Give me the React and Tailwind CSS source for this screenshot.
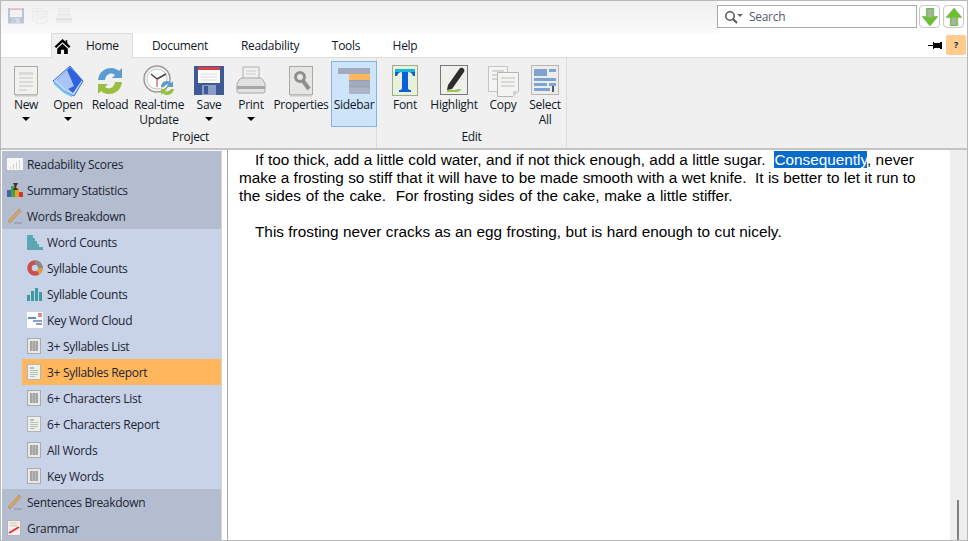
const ui = "font-['Open_Sans','Noto_Sans',sans-serif] tracking-[-0.3px]";

function Doc({ children, bg = "#f1f1ee" }) {
  return (
    <svg width="26" height="32" viewBox="0 0 26 32">
      <rect x="1.500" y="1.500" width="23" height="28" fill={bg} stroke="#a9a9a4" />
      <path d="M2 30.500h22" stroke="#c9c9c9" strokeWidth="2" />
      {children}
    </svg>
  );
}

function NewIcon() {
  return (
    <Doc>
      <path d="M6 7h14v3H6zM6 12h14v2H6zM6 16h14v2H6zM6 20h14v2H6zM6 24h8v2H6z" fill="#dadada" />
    </Doc>
  );
}

function OpenIcon() {
  return (
    <svg width="32" height="32" viewBox="0 0 32 32">
      <path d="M1 16 L12 26 L22 31 L31 16 L18 1 Z" fill="#bcd6fb" stroke="#3d6fe0" />
      <path d="M5 15 L18 2 L30 15 L21 28 Z" fill="#2f62dc" />
      <path d="M5 15 L15 5 L22 21 L14 25 Z" fill="#a9c5f5" />
      <path d="M2 18 L12 27 L20 31" stroke="#6fc3ee" strokeWidth="2" fill="none" />
    </svg>
  );
}

function ReloadIcon() {
  return (
    <svg width="30" height="30" viewBox="0 0 30 30">
      <path d="M3 14 C4 5 11 2 16 2 C20 2 23 4 24 5 L27 2 V12 H17 L20 9 C16 6 11 8 10 14 Z" fill="#5b9dd3" />
      <path d="M27 16 C26 25 19 28 14 28 C10 28 7 26 6 25 L3 28 V18 H13 L10 21 C14 24 19 22 20 16 Z" fill="#98bf42" />
    </svg>
  );
}

function ClockIcon() {
  return (
    <svg width="32" height="32" viewBox="0 0 32 32">
      <circle cx="14" cy="14" r="13" fill="#f4f4f4" stroke="#9a9a9a" strokeWidth="1.500" />
      <circle cx="14" cy="14" r="10" fill="#fff" stroke="#c4c4c4" />
      <path d="M14 14 L8 9 M14 14 L23 9" stroke="#444" strokeWidth="1.500" />
      <path d="M14 14 L14 22" stroke="#c33" />
      <path d="M18 22 C18 17 22 16 24 16 C26 16 27 17 28 18 L30 16 V22 H24 L26 20 C24 19 22 20 21 22 Z" fill="#5b9dd3" />
      <path d="M31 24 C30 29 26 30 24 30 C22 30 20 29 20 28 L18 30 V24 H24 L22 26 C24 27 27 26 28 24 Z" fill="#98bf42" />
    </svg>
  );
}

function SaveIcon({ w = 30, h = 30 }) {
  return (
    <svg width={w} height={h} viewBox="0 0 30 30">
      <path d="M0 0h30v29H0z" fill="#3d5a97" />
      <rect x="4" y="1" width="22" height="16" fill="#fbfbfb" />
      <rect x="4" y="1" width="22" height="3" fill="#d94141" />
      <path d="M7 8h16M7 11h16M7 14h16" stroke="#ddd" />
      <rect x="8" y="19" width="14" height="10" fill="#8d9cc2" />
      <rect x="10" y="20" width="4" height="8" fill="#3d5a97" />
    </svg>
  );
}

function PrintIcon({ w = 30, h = 30 }) {
  return (
    <svg width={w} height={h} viewBox="0 0 30 30">
      <rect x="7" y="1" width="16" height="13" fill="#f0f0f0" stroke="#b0b0b0" />
      <path d="M10 5h10M10 8h10" stroke="#ccc" />
      <path d="M3 14 Q4 12 7 12 H23 Q26 12 27 14 L29 18 V25 Q29 27 27 27 H3 Q1 27 1 25 V18 Z" fill="#e2e2e2" stroke="#a8a8a8" />
      <rect x="1" y="20" width="28" height="3" fill="#a6a6a6" />
    </svg>
  );
}

function PropertiesIcon() {
  return (
    <Doc bg="#e6e6e2">
      <circle cx="12" cy="12" r="4.500" fill="none" stroke="#8f8f8f" strokeWidth="3" />
      <path d="M15 16 L21 24" stroke="#8f8f8f" strokeWidth="4" />
    </Doc>
  );
}

function SidebarIcon() {
  return (
    <svg width="32" height="26" viewBox="0 0 32 26">
      <rect x="0" y="0" width="32" height="6" fill="#a2abbe" />
      <rect x="11" y="6" width="21" height="6" fill="#ffb65c" />
      <rect x="11" y="12" width="21" height="7" fill="#a2abbe" />
      <rect x="11" y="19" width="21" height="7" fill="#adb4c5" />
      <path d="M11 12.500h21M11 19h21" stroke="#8f98ac" strokeWidth="0.600" />
    </svg>
  );
}

function FontIcon() {
  return (
    <svg width="26" height="31" viewBox="0 0 26 31">
      <rect x="0.500" y="0.500" width="25" height="30" fill="#e8f2da" stroke="#9dad8d" />
      <path d="M3 4 H23 V11 H21 Q20 7 16 7 V23 Q16 25 19 25 V27 H7 V25 Q10 25 10 23 V7 Q6 7 5 11 H3 Z" fill="#0a5fd8" />
      <path d="M3 4 H23 V7 H3 Z" fill="#19b6d8" />
    </svg>
  );
}

function HighlightIcon() {
  return (
    <svg width="28" height="31" viewBox="0 0 28 31">
      <rect x="0.500" y="0.500" width="27" height="29" fill="#efefec" stroke="#777" />
      <path d="M8 20 L20 3 Q22 2 24 4 Q25 6 24 7 L12 24 L7 25 Z" fill="#2d2d2d" />
      <path d="M7 25 L14 25 L19 24 L22 25 L17 27 L7 27 Z" fill="#9bc24a" />
    </svg>
  );
}

function CopyIcon({ w = 32, h = 32 }) {
  return (
    <svg width={w} height={h} viewBox="0 0 32 32">
      <rect x="1.500" y="1.500" width="19" height="25" fill="#f4f4f2" stroke="#c4c4c4" />
      <path d="M5 6h12M5 10h12M5 14h12" stroke="#d4d4d4" strokeWidth="2" />
      <path d="M10.500 7.500 H31.500 V26 L26 31.500 H10.500 Z" fill="#f4f4f2" stroke="#b6b6b6" />
      <path d="M14 13h14M14 17h14M14 21h14" stroke="#cfcfcf" strokeWidth="1.500" />
      <path d="M26 31 V26 H31 Z" fill="#d2d2d2" />
    </svg>
  );
}

function SelectAllIcon() {
  return (
    <svg width="28" height="31" viewBox="0 0 28 31">
      <rect x="0.500" y="0.500" width="27" height="29" fill="#ececea" stroke="#b5b5b5" />
      <path d="M3 4h13v7H3zM18 4h7v3h-7zM3 13h22v3H3zM3 18h13v3H3zM18 18h7v3h-7zM3 23h16v3H3z" fill="#7fa3cf" />
      <path d="M22 21v6" stroke="#555" strokeWidth="2" />
    </svg>
  );
}

function Caret() {
  return <div className="w-0 h-0 border-x-[4px] border-x-transparent border-t-[4px] border-t-black" />;
}

function RibbonButton({ label, line2, caret, width, active, children }) {
  return (
    <div
      className={`flex flex-col items-center shrink-0 border ${
        active ? "bg-[#cde4fb] border-[#7fb4e6]" : "border-transparent"
      }`}
      style={{ width }}
    >
      <div className="h-[33px] mt-[2px] flex items-center justify-center">{children}</div>
      <div className="text-[12px] leading-[15px] text-[#101828] whitespace-nowrap">{label}</div>
      {line2 ? <div className="text-[12px] leading-[15px] text-[#101828]">{line2}</div> : null}
      {caret ? (
        <div className="mt-[5px]">
          <Caret />
        </div>
      ) : null}
    </div>
  );
}

function RibbonGroup({ title, className, children }) {
  return (
    <div className={`relative h-full border-r border-[#dcdcdc] ${className}`}>
      <div className="flex pt-[3px]">{children}</div>
      <div className="absolute bottom-[4px] left-0 right-0 text-center text-[12px] leading-[15px] text-[#101828]">
        {title}
      </div>
    </div>
  );
}

function ReadabilityIcon() {
  return (
    <svg width="16" height="12" viewBox="0 0 16 12">
      <rect width="16" height="12" fill="#f7f7f7" />
      <path d="M3 9h1v2H3zM6 6h1v5H6zM9 4h1v7H9zM12 2h1v9h-1z" fill="#d4d4d4" />
    </svg>
  );
}

function SummaryIcon() {
  return (
    <svg width="16" height="14" viewBox="0 0 16 14">
      <rect x="0" y="7" width="4" height="7" fill="#3f62b5" />
      <rect x="4" y="3" width="4" height="11" fill="#4aa03f" />
      <rect x="8" y="5" width="4" height="9" fill="#e2a12c" />
      <rect x="12" y="9" width="4" height="5" fill="#d8332a" />
      <path d="M6 0h5L9 4l2 3H6l2-3z" fill="#333" />
    </svg>
  );
}

function PencilIcon() {
  return (
    <svg width="16" height="16" viewBox="0 0 16 16">
      <path d="M1 13 L12 1 L14 3 L3 15 Z" fill="#d9a860" stroke="#a98a5a" strokeWidth="0.700" />
      <path d="M7 15h8" stroke="#8a8f9e" />
    </svg>
  );
}

function WordCountIcon() {
  return (
    <svg width="16" height="15" viewBox="0 0 16 15">
      <path d="M0 0h6v3H0zM0 3h8v3H0zM0 6h10v3H0zM0 9h12v3H0zM0 12h16v3H0z" fill="#5ba8b5" />
    </svg>
  );
}

function RingIcon() {
  return (
    <svg width="16" height="16" viewBox="0 0 16 16">
      <circle cx="8" cy="8" r="5.500" fill="none" stroke="#c9514b" strokeWidth="4.500" />
      <path d="M8 2.500 A5.500 5.500 0 0 1 13.500 8" fill="none" stroke="#8a8a8a" strokeWidth="4.500" />
      <path d="M13.500 8 A5.500 5.500 0 0 1 11 12.600" fill="none" stroke="#d9a23c" strokeWidth="4.500" />
    </svg>
  );
}

function BarsIcon() {
  return (
    <svg width="16" height="14" viewBox="0 0 16 14">
      <path d="M0 8h3v6H0zM4 4h3v10H4zM8 1h3v13H8zM12 5h3v9h-3z" fill="#3f9a9e" />
    </svg>
  );
}

function CloudIcon() {
  return (
    <svg width="16" height="16" viewBox="0 0 16 16">
      <rect width="16" height="16" fill="#fff" />
      <path d="M1 5h8v2H1z" fill="#5b8fc9" />
      <path d="M11 1h4v4h-4z" fill="#d98f8f" />
      <path d="M6 8h9v2H6z" fill="#7fa7cf" />
      <path d="M9 11h6v2H9z" fill="#9a9a9a" />
    </svg>
  );
}

function ListIcon() {
  return (
    <svg width="14" height="16" viewBox="0 0 14 16">
      <rect x="0.500" y="0.500" width="13" height="15" fill="#e8e8e8" stroke="#aaa" />
      <path d="M3 3h8v10H3z" fill="#a4a4a4" />
      <path d="M5.500 3v10M8.500 3v10" stroke="#c4c4c4" strokeWidth="0.700" />
    </svg>
  );
}

function ReportIcon() {
  return (
    <svg width="14" height="16" viewBox="0 0 14 16">
      <rect x="0.500" y="0.500" width="13" height="15" fill="#eeeeea" stroke="#b4b4b4" />
      <path d="M3 3h4v2H3zM3 6h8v1H3zM3 8h8v1H3zM3 10h8v1H3zM3 12h5v1H3z" fill="#b3c2b3" />
    </svg>
  );
}

function GrammarIcon() {
  return (
    <svg width="14" height="16" viewBox="0 0 14 16">
      <rect x="0.500" y="0.500" width="13" height="15" fill="#f4efe9" stroke="#b5b5b5" />
      <path d="M3 3h7M3 5.500h7" stroke="#cfc6bc" />
      <path d="M2 13 L12 7" stroke="#e0323a" strokeWidth="2" />
    </svg>
  );
}

function SideRow({ icon, label, sub, active }) {
  return (
    <div
      className={`flex h-[26px] items-center shrink-0 text-[12px] text-[#1b2433] ${
        sub ? "pl-[20px] bg-[#c8d3e7]" : "pl-[3px] bg-[#b4bdd0]"
      }`}
    >
      <div className={`flex flex-1 h-full items-center ${active ? "bg-[#ffb65c]" : ""}`}>
        <div className={`flex items-center ${sub ? "w-[22px] pl-[5px]" : "w-[19px] pl-[2px]"}`}>{icon}</div>
        <span className="ml-[3px] pt-[2px] whitespace-nowrap">{label}</span>
      </div>
    </div>
  );
}

const tabs = ["Document", "Readability", "Tools", "Help"];
const tabWidths = [94, 86, 66, 52];

export default function App() {
  return (
    <div className={`w-[968px] h-[541px] overflow-hidden flex flex-col bg-white border border-[#b9b9b9] ${ui}`}>
      {/* quick access bar */}
      <div className="h-[32px] shrink-0 flex items-start bg-gradient-to-b from-[#f0f0f0] to-[#f9f9f9]">
        <div className="flex items-center gap-[8px] pl-[7px] pt-[7px] opacity-30">
          <SaveIcon w={16} h={16} />
          <CopyIcon w={16} h={16} />
          <PrintIcon w={16} h={16} />
        </div>
        <div className="ml-auto flex items-start h-full bg-white pt-[4px] pr-[3px]">
          <div className="w-[200px] h-[23px] border border-[#a8a8a8] flex items-center pl-[6px] bg-white">
            <svg width="20" height="14" viewBox="0 0 20 14">
              <circle cx="6" cy="6" r="4.200" fill="none" stroke="#555" strokeWidth="1.500" />
              <path d="M9 9l4 4" stroke="#555" strokeWidth="2" />
              <path d="M13 4h6l-3 3z" fill="#666" />
            </svg>
            <span className="ml-[5px] text-[12px] text-[#555b6b]">Search</span>
          </div>
          <div className="ml-[2px] w-[21px] h-[23px] rounded-[4px] border border-[#c8c8c8] flex items-center justify-center">
            <svg width="16" height="18" viewBox="0 0 15 17">
              <path d="M4 0h7v8h4l-7.500 9L0 8h4z" fill="#6cc22b" stroke="#7ea877" strokeWidth="0.600" />
              <path d="M5 1h5v8H5z" fill="#a3b59a" />
            </svg>
          </div>
          <div className="ml-[3px] w-[21px] h-[23px] rounded-[4px] border border-[#c8c8c8] flex items-center justify-center">
            <svg width="16" height="18" viewBox="0 0 15 17">
              <path d="M4 17h7V9h4L7.500 0 0 9h4z" fill="#6cc22b" stroke="#7ea877" strokeWidth="0.600" />
              <path d="M5 9h5v7H5z" fill="#a3b59a" />
            </svg>
          </div>
        </div>
      </div>

      {/* tabs */}
      <div className="h-[24px] shrink-0 flex items-end relative text-[12px] text-[#101828]">
        <div className="ml-[50px] w-[82px] h-[25px] flex items-center border border-b-0 border-[#dcdcdc] bg-[#f0f0f0] relative top-[1px]">
          <svg className="ml-[2px]" width="17" height="17" viewBox="0 0 16 16">
            <path d="M8 1 L0.500 8 L2 9.500 L8 4 L14 9.500 L15.500 8 L12.500 5 V2 H11 V3.500 Z M3 10 V15 H6.500 V11 H9.500 V15 H13 V10 L8 5.500 Z" fill="#000" />
          </svg>
          <span className="ml-[15px]">Home</span>
        </div>
        {tabs.map((t, i) => (
          <div key={t} className="h-[24px] pt-[1px] flex items-center justify-center" style={{ width: tabWidths[i] }}>
            {t}
          </div>
        ))}
        <div className="ml-auto mr-[1px] h-full flex items-center">
          <svg width="14" height="13" viewBox="0 0 14 13">
            <path d="M0 6h5v1H0z M5 3h1v1h6V3h2v7h-2V9H6v1H5z" fill="#000" />
          </svg>
          <div className="ml-[4px] w-[20px] h-[20px] rounded-[2px] bg-[#ffcb8f] flex items-center justify-center text-[9px] font-bold">?</div>
        </div>
      </div>

      {/* ribbon */}
      <div className="h-[93px] shrink-0 bg-[#f0f0f0] border-t border-b-2 border-[#dcdcdc] border-b-[#c4c4c4] flex pl-[4px]">
        <RibbonGroup title="Project" className="w-[372px]">
          <RibbonButton label="New" caret width={42}><NewIcon /></RibbonButton>
          <RibbonButton label="Open" caret width={42}><OpenIcon /></RibbonButton>
          <RibbonButton label="Reload" width={42}><ReloadIcon /></RibbonButton>
          <RibbonButton label="Real-time" line2="Update" width={56}><ClockIcon /></RibbonButton>
          <RibbonButton label="Save" caret width={44}><SaveIcon /></RibbonButton>
          <RibbonButton label="Print" caret width={40}><PrintIcon /></RibbonButton>
          <RibbonButton label="Properties" width={60}><PropertiesIcon /></RibbonButton>
          <div className="h-[66px] flex">
            <RibbonButton label="Sidebar" width={46} active><SidebarIcon /></RibbonButton>
          </div>
        </RibbonGroup>
        <RibbonGroup title="Edit" className="w-[190px] pl-[5px]">
          <RibbonButton label="Font" width={46}><FontIcon /></RibbonButton>
          <RibbonButton label="Highlight" width={52}><HighlightIcon /></RibbonButton>
          <RibbonButton label="Copy" width={46}><CopyIcon /></RibbonButton>
          <RibbonButton label="Select" line2="All" width={38}><SelectAllIcon /></RibbonButton>
        </RibbonGroup>
      </div>

      {/* body */}
      <div className="flex-1 min-h-0 flex">
        <div className="w-[221px] shrink-0 pl-[1px] pt-[1px] flex flex-col overflow-hidden border-r border-[#d4d6dc]">
          <SideRow icon={<ReadabilityIcon />} label="Readability Scores" />
          <SideRow icon={<SummaryIcon />} label="Summary Statistics" />
          <SideRow icon={<PencilIcon />} label="Words Breakdown" />
          <SideRow sub icon={<WordCountIcon />} label="Word Counts" />
          <SideRow sub icon={<RingIcon />} label="Syllable Counts" />
          <SideRow sub icon={<BarsIcon />} label="Syllable Counts" />
          <SideRow sub icon={<CloudIcon />} label="Key Word Cloud" />
          <SideRow sub icon={<ListIcon />} label="3+ Syllables List" />
          <SideRow sub active icon={<ReportIcon />} label="3+ Syllables Report" />
          <SideRow sub icon={<ListIcon />} label="6+ Characters List" />
          <SideRow sub icon={<ReportIcon />} label="6+ Characters Report" />
          <SideRow sub icon={<ListIcon />} label="All Words" />
          <SideRow sub icon={<ListIcon />} label="Key Words" />
          <SideRow icon={<PencilIcon />} label="Sentences Breakdown" />
          <SideRow icon={<GrammarIcon />} label="Grammar" />
        </div>
        <div className="ml-[5px] flex-1 min-w-0 flex border-l border-[#a8a8b4]">
          <div className="flex-1 pl-[11px] pt-[1px] text-[15.33px] leading-[18px] tracking-normal text-black font-['Liberation_Sans',sans-serif] whitespace-pre">
            <div className="pl-[16px] [word-spacing:0.12px]">{"If too thick, add a little cold water, and if not thick enough, add a little sugar.  "}<span className="bg-[#0a6cc9] text-white">Consequently</span>{", never"}</div>
            <div className="[word-spacing:0.05px]">make a frosting so stiff that it will have to be made smooth with a wet knife.  It is better to let it run to</div>
            <div className="[word-spacing:0.55px]">the sides of the cake.  For frosting sides of the cake, make a little stiffer.</div>
            <div className="mt-[18px] pl-[16px] [word-spacing:0.15px]">This frosting never cracks as an egg frosting, but is hard enough to cut nicely.</div>
          </div>
          <div className="w-[17px] shrink-0 bg-[#eeeeee] relative">
            <div className="absolute left-[7px] top-[350px] bottom-0 w-[2px] bg-[#808080]" />
          </div>
        </div>
      </div>
    </div>
  );
}
